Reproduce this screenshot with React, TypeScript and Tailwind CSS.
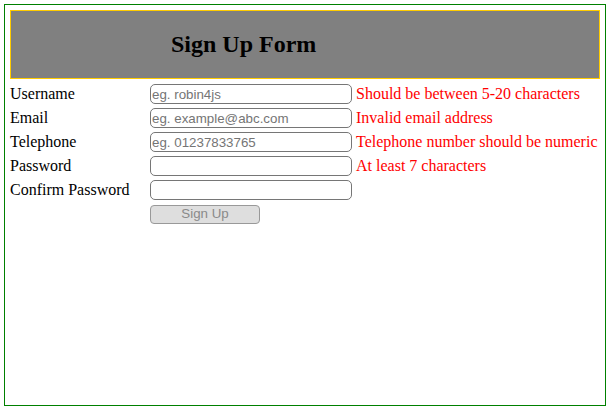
import React from 'react';

const FIELDS = [
  { label: 'Username', type: 'text', placeholder: 'eg. robin4js', error: 'Should be between 5-20 characters' },
  { label: 'Email', type: 'text', placeholder: 'eg. example@abc.com', error: 'Invalid email address' },
  { label: 'Telephone', type: 'text', placeholder: 'eg. 01237833765', error: 'Telephone number should be numeric' },
  { label: 'Password', type: 'password', placeholder: '', error: 'At least 7 characters' },
  { label: 'Confirm Password', type: 'password', placeholder: '', error: '' },
];

export default function App() {
  return (
    <div className="w-[612px] h-[412px] bg-white pt-1 pl-1 font-['Liberation_Serif',serif] text-black">
      <div className="w-[602px] h-[402px] border border-[#008000] p-[5px]">
        <div className="h-[69px] border border-[#ffcc00] bg-[#808080] flex items-center pl-[160px]">
          <h2 className="text-2xl font-bold leading-none -mt-[1px]">Sign Up Form</h2>
        </div>

        <div className="mt-[3px] flex flex-col">
          {FIELDS.map((f) => (
            <div key={f.label} className="h-6 flex items-center">
              <label className="w-[140px] text-base leading-[18px] -mt-[1px]">{f.label}</label>
              <input
                type={f.type}
                placeholder={f.placeholder}
                className="w-[202px] h-5 border border-[#767676] rounded-[5px] px-[1px] bg-white font-['Liberation_Sans',sans-serif] text-[13.33px] placeholder:text-[#757575]"
              />
              {f.error && (
                <span className="ml-1 text-base leading-[18px] text-[#ff0000] -mt-[1px]">{f.error}</span>
              )}
            </div>
          ))}
          <div className="h-6 flex items-center pl-[140px]">
            <button
              type="button"
              className="w-[110px] h-[19px] border border-[#999999] rounded-[4px] bg-[#dedede] text-[#8a8a8a] font-['Liberation_Sans',sans-serif] text-[13.33px] leading-none"
            >
              Sign Up
            </button>
          </div>
        </div>
      </div>
    </div>
  );
}
